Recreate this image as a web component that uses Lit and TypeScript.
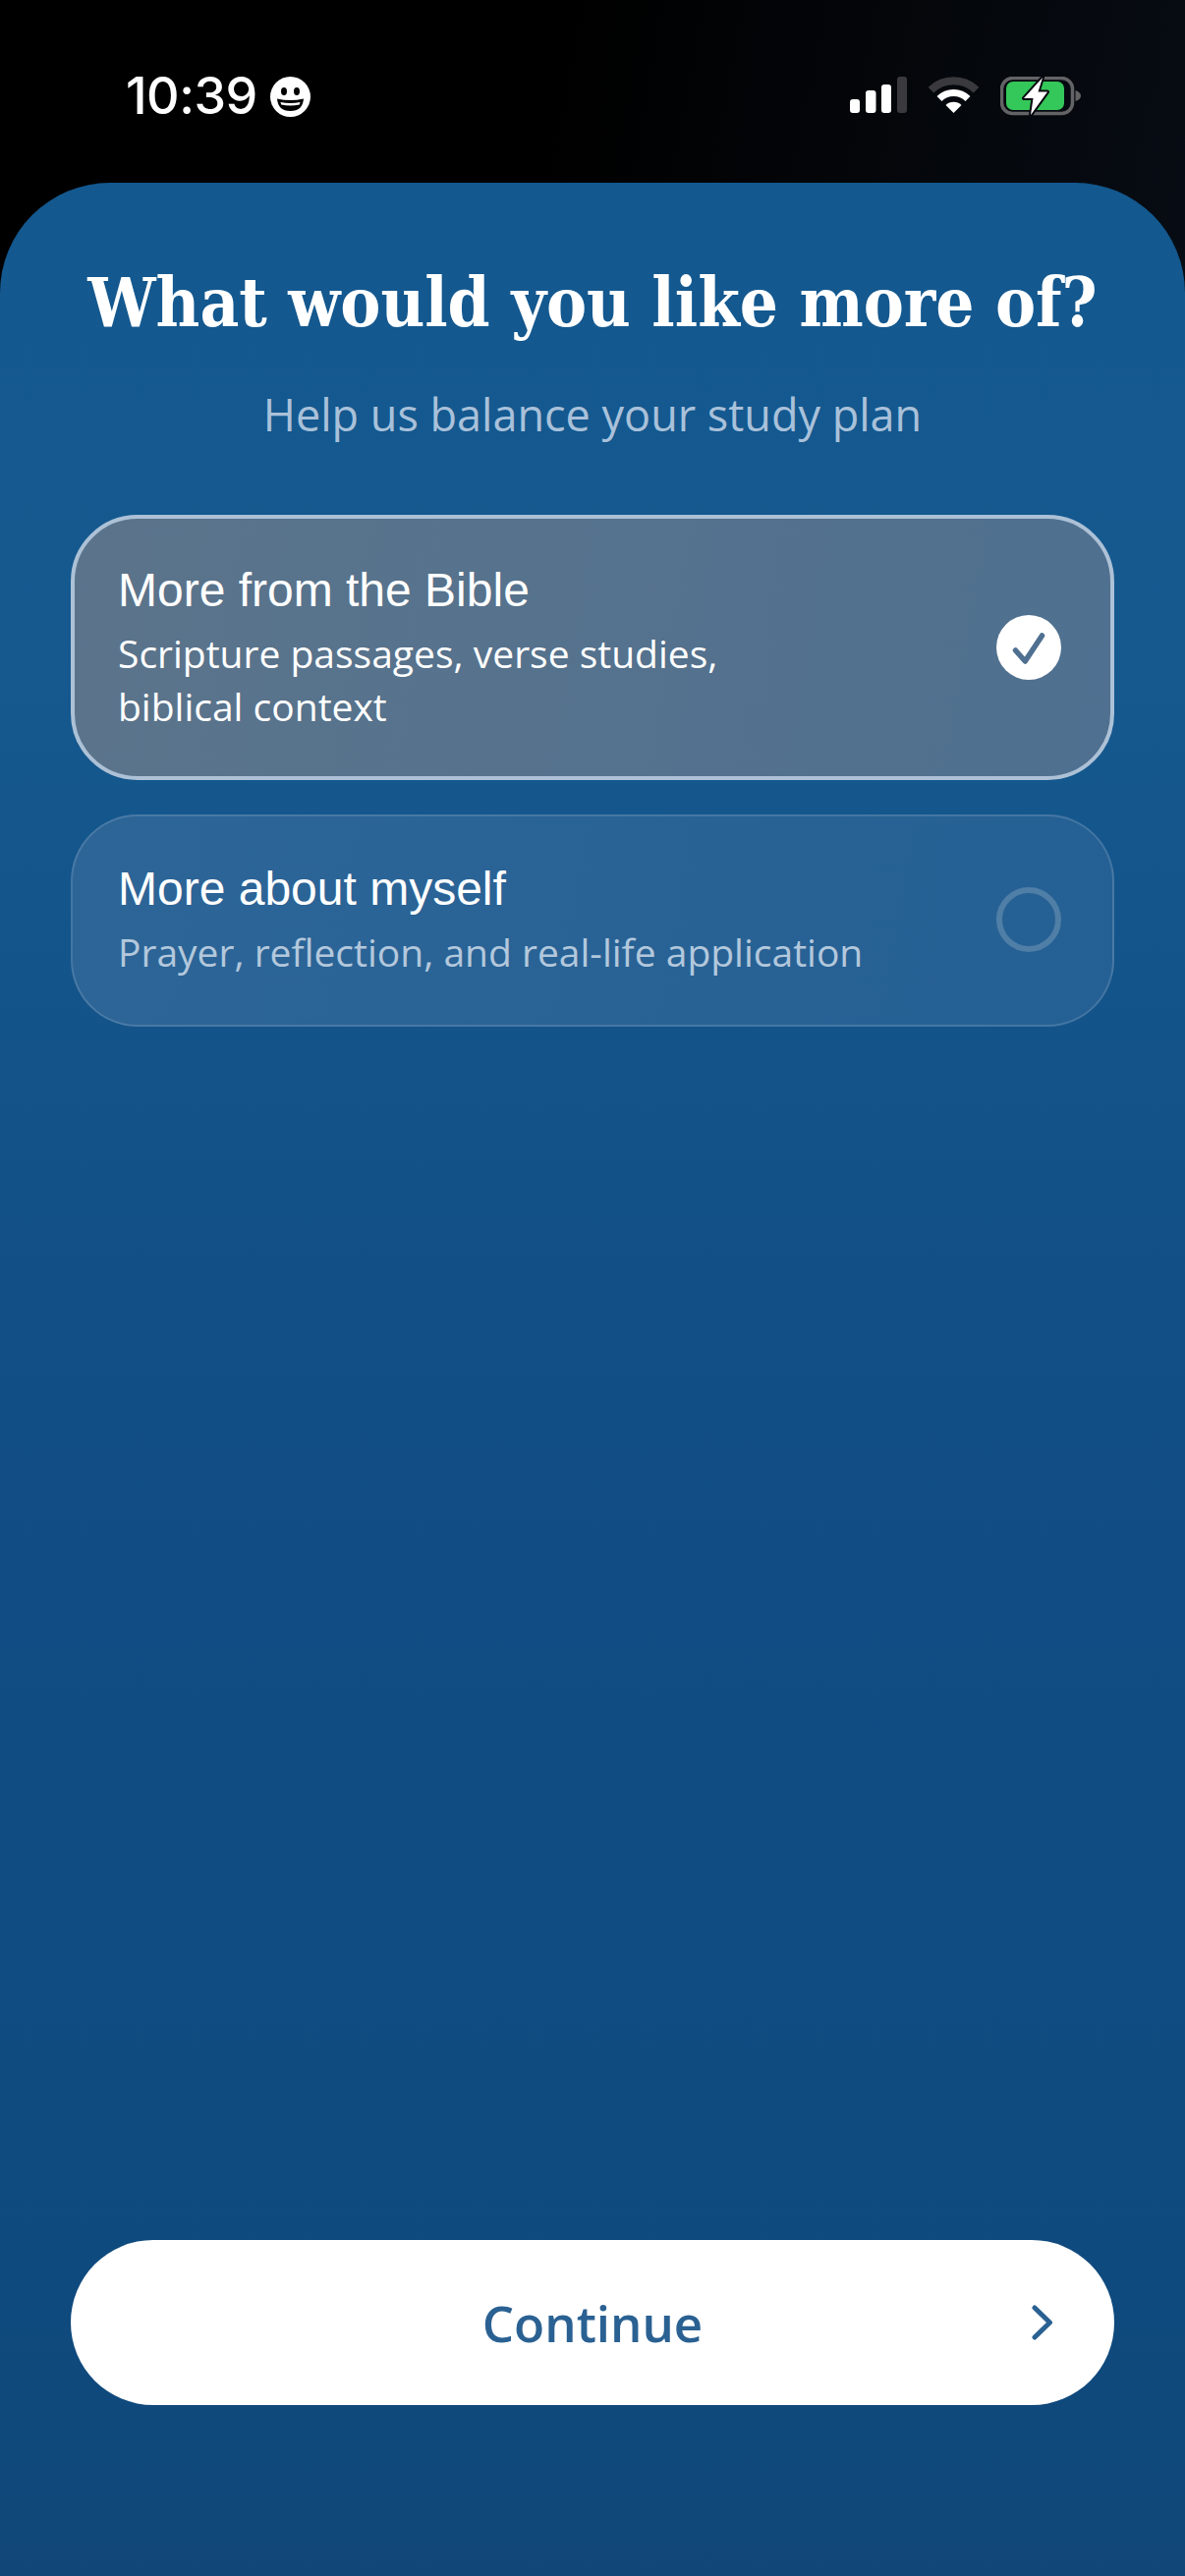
import { LitElement, css, html } from 'lit';
import { customElement, property } from 'lit/decorators.js';

@customElement('study-option')
class StudyOption extends LitElement {
  @property({ type: String }) heading = '';
  @property({ type: Boolean, reflect: true }) selected = false;

  static styles = css`
    :host {
      display: block;
    }
    .card {
      box-sizing: border-box;
      display: flex;
      align-items: center;
      justify-content: space-between;
      padding: 45px 52px 47px 46px;
      border-radius: 68px;
      border: 2px solid rgba(255, 255, 255, 0.14);
      background: linear-gradient(100deg, #2d6597, #256094);
    }
    .card.on {
      padding: 44px 50px 44px 44px;
      border: 4px solid #adc1d6;
      background: linear-gradient(100deg, #5b748b, #4f7090);
    }
    .text {
      width: 800px;
    }
    .title {
      font: 48px/58px 'Liberation Sans', Arial, sans-serif;
      color: #fff;
    }
    .sub {
      margin-top: 8px;
      font: 39px/54px 'Open Sans', sans-serif;
      color: #b3c8dc;
    }
    .on .sub {
      color: #fff;
    }
    .mark {
      flex: none;
      box-sizing: border-box;
      width: 66px;
      height: 66px;
      border-radius: 50%;
      border: 6px solid #4f7ea6;
    }
    .on .mark {
      border: 0;
      background: #fff;
    }
    svg {
      display: block;
    }
  `;

  render() {
    return html`
      <div class="card ${this.selected ? 'on' : ''}">
        <div class="text">
          <div class="title">${this.heading}</div>
          <div class="sub"><slot></slot></div>
        </div>
        <div class="mark">
          ${this.selected
            ? html`<svg width="66" height="66" viewBox="0 0 66 66" fill="none">
                <path d="M19.5 36L29.3 47L46.5 21" stroke="#4f7090" stroke-width="5.5" stroke-linecap="round" stroke-linejoin="round" />
              </svg>`
            : ''}
        </div>
      </div>
    `;
  }
}

@customElement('app-root')
class AppRoot extends LitElement {
  static styles = css`
    :host {
      display: block;
    }
    .screen {
      width: 1206px;
      height: 2622px;
      overflow: hidden;
      display: flex;
      flex-direction: column;
      background: linear-gradient(100deg, #000 35%, #0c1420);
    }
    .status {
      flex: none;
      box-sizing: border-box;
      height: 186px;
      padding: 78px 106px 0 128px;
      display: flex;
      align-items: flex-start;
    }
    .time {
      font: 500 52px/39px Inter, 'Liberation Sans', sans-serif;
      color: #fff;
      letter-spacing: -0.5px;
    }
    .smile {
      margin-left: 13px;
    }
    .icons {
      margin-left: auto;
      display: flex;
      gap: 22px;
    }
    svg {
      display: block;
    }
    .sheet {
      flex: 1;
      box-sizing: border-box;
      padding: 80px 72px 174px;
      display: flex;
      flex-direction: column;
      border-radius: 112px 112px 0 0;
      background: linear-gradient(#13588f, #15598f 20%, #114e85 50%, #0f4a7e 88%, #104778);
    }
    h1 {
      margin: 0;
      text-align: center;
      white-space: nowrap;
      font: 700 68.5px/84px 'DejaVu Serif Condensed', 'DejaVu Serif', serif;
      font-stretch: condensed;
      color: #fff;
    }
    .lead {
      margin: 42px 0 0;
      text-align: center;
      font: 45px/60px 'Open Sans', sans-serif;
      color: #a9c1da;
    }
    .options {
      margin-top: 72px;
      display: flex;
      flex-direction: column;
      gap: 35px;
    }
    .continue {
      margin-top: auto;
      box-sizing: border-box;
      height: 168px;
      padding: 0 62px;
      display: grid;
      grid-template-columns: 1fr auto 1fr;
      align-items: center;
      border-radius: 84px;
      background: #fff;
      font: 600 51px/68px 'Open Sans', sans-serif;
      color: #2a6192;
    }
    .continue span {
      grid-column: 2;
    }
    .continue svg {
      justify-self: end;
    }
  `;

  render() {
    return html`
      <div class="screen">
        <div class="status">
          <div class="time">10:39</div>
          <svg class="smile" width="41" height="41" viewBox="0 0 41 41">
            <circle cx="20.5" cy="20.5" r="20.5" fill="#fff" />
            <ellipse cx="14" cy="15" rx="3" ry="4" fill="#000" />
            <ellipse cx="27" cy="15" rx="3" ry="4" fill="#000" />
            <path d="M7 22.5Q20.5 25.5 34 22.5Q33 35 20.5 35Q8 35 7 22.5Z" fill="#000" />
            <path d="M10.5 26Q20.5 28.2 30.5 26L29.8 28.5Q20.5 30.4 11.2 28.5Z" fill="#fff" />
          </svg>
          <div class="icons">
            <svg width="58" height="38" viewBox="0 0 58 38">
              <rect x="0" y="23" width="10" height="14" rx="3" fill="#fff" />
              <rect x="16" y="14" width="10.500" height="23" rx="3" fill="#fff" />
              <rect x="32" y="8" width="10" height="29" rx="3" fill="#fff" />
              <rect x="48" y="0" width="10" height="37" rx="3" fill="#3a3a3e" />
            </svg>
            <svg width="51" height="38" viewBox="0 0 51 38" fill="none">
              <path d="M2.5 13.700A33 33 0 0 1 48.500 13.700" stroke="#3a3a3e" stroke-width="8" />
              <path d="M11 22.500A20.500 20.500 0 0 1 40 22.500" stroke="#fff" stroke-width="7" />
              <path d="M25.500 37L17.500 29A11.300 11.300 0 0 1 33.500 29Z" fill="#fff" />
            </svg>
            <svg width="82" height="40" viewBox="0 0 82 40" fill="none">
              <rect x="1.500" y="1.500" width="72" height="36" rx="11" stroke="#636366" stroke-width="3.500" />
              <rect x="6" y="5" width="59" height="29" rx="7" fill="#34c759" />
              <path d="M76.500 14Q82 16 82 19.500Q82 23 76.500 25Z" fill="#636366" />
              <path d="M43 1L24 22H33.500L31 39L48 15.500H38.500Z" fill="#fff" stroke="#05080f" stroke-width="4" paint-order="stroke" stroke-linejoin="round" />
            </svg>
          </div>
        </div>
        <div class="sheet">
          <h1>What would you like more of?</h1>
          <p class="lead">Help us balance your study plan</p>
          <div class="options">
            <study-option heading="More from the Bible" selected>Scripture passages, verse studies,<br />biblical context</study-option>
            <study-option heading="More about myself">Prayer, reflection, and real-life application</study-option>
          </div>
          <div class="continue">
            <span>Continue</span>
            <svg width="22" height="36" viewBox="0 0 22 36" fill="none">
              <path d="M3 3L18.500 18L3 33" stroke="#2a6192" stroke-width="5" stroke-linecap="round" stroke-linejoin="round" />
            </svg>
          </div>
        </div>
      </div>
    `;
  }
}

export default AppRoot;
